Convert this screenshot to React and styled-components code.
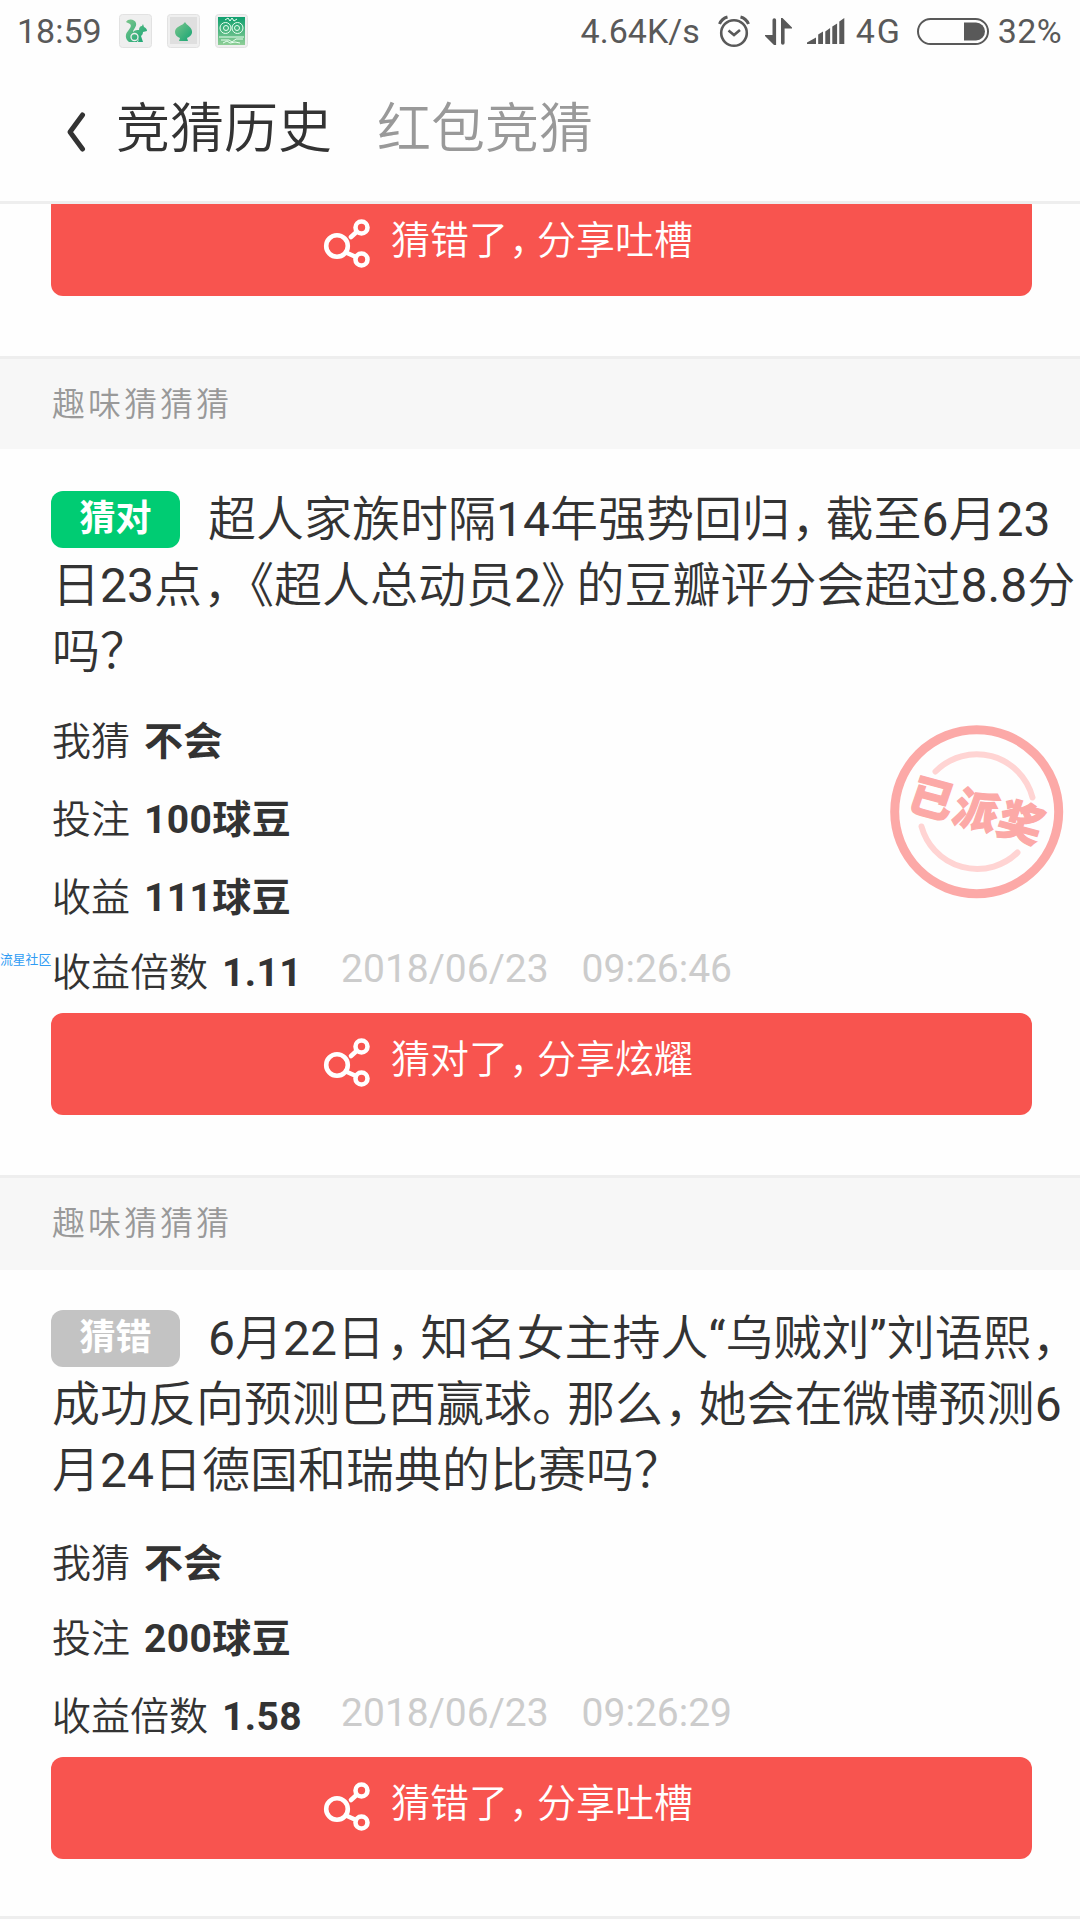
import React from 'react';
import styled, { createGlobalStyle, css } from 'styled-components';

const GlobalStyle = createGlobalStyle`
	html, body {
		margin: 0;
		background: #fff;
	}

	body {
		overflow: hidden;
		font-family: Roboto, "Noto Sans CJK SC", sans-serif;
		text-spacing-trim: space-all;
		color: #333;
	}
`;

const Screen = styled.div`
	position: relative;
	display: flex;
	flex-direction: column;
	width: 1080px;
	height: 1920px;
	overflow: hidden;
	background: #fefefe;
`;

const StatusBar = styled.div`
	display: flex;
	flex: none;
	align-items: center;
	height: 62px;
	padding: 0 18px 0 17px;
	box-sizing: border-box;
	font-size: 34px;
	line-height: 62px;
	color: #595959;

	svg {
		flex: none;
	}
`;

const Notifications = styled.div`
	display: flex;
	gap: 15px;
	margin-left: 17px;
`;

const StatusText = styled.span`
	white-space: nowrap;
	margin-left: ${props => props.$left || 0}px;
	letter-spacing: ${props => props.$spacing || 0}px;
`;

const Spacer = styled.div`
	flex: 1;
`;

const StatusIcon = styled.svg`
	margin-left: ${props => props.$left || 0}px;
`;

const Header = styled.div`
	display: flex;
	flex: none;
	align-items: flex-start;
	height: 142px;
	padding-left: 64px;
	box-sizing: border-box;
	border-bottom: 3px solid #eee;
`;

const BackIcon = styled.svg`
	margin-top: 48px;
	margin-right: 28px;
`;

const Tab = styled.div`
	margin-top: 28px;
	margin-right: 45px;
	font-size: 54px;
	line-height: 80px;
	font-weight: 350;
	color: ${props => (props.$active ? '#333' : '#999')};
`;

const List = styled.div`
	flex: 1;
	overflow: hidden;
`;

const Card = styled.div`
	display: flex;
	flex-direction: column;
	height: ${props => props.$height}px;
	padding: ${props => props.$top}px 48px 0 51px;
	box-sizing: border-box;
	border-bottom: 3px solid #eee;
`;

const ClippedCard = styled(Card)`
	margin-top: -10px;
`;

const SectionTitle = styled.div`
	height: ${props => props.$height}px;
	padding-left: 52px;
	box-sizing: border-box;
	background: #f7f7f7;
	font-size: 33px;
	line-height: 92px;
	letter-spacing: 3px;
	font-weight: 350;
	color: #999;
`;

const Question = styled.div`
	margin-left: 1px;
	margin-right: -48px;
	height: 198px;
	font-size: 48px;
	line-height: 64px;
	font-weight: 350;
	white-space: nowrap;
`;

const Line = styled.div`
	display: flex;
	height: 66px;
`;

const Badge = styled.span`
	display: block;
	flex: none;
	width: 129px;
	height: 57px;
	margin: 3px 28px 0 -1px;
	border-radius: 12px;
	background: ${props => (props.$win ? '#00cc73' : '#c3c3c3')};
	color: #fff;
	font-size: 36px;
	line-height: 56px;
	font-weight: 700;
	text-align: center;
`;

const Mark = styled.span`
	margin-left: ${props => props.$before || 0}em;
	margin-right: ${props => props.$after || 0}em;
	font-feature-settings: "halt";
`;

const Regular = styled.span`
	font-weight: 400;
`;

const Detail = styled.div`
	display: flex;
	height: ${props => props.$height || 78}px;
	margin-left: 1px;
	font-size: 39px;
	line-height: 64px;
	font-weight: 350;
`;

const Value = styled.span`
	margin-left: 14px;
	font-weight: 700;
	letter-spacing: 0.4px;
`;

const Time = styled.span`
	display: flex;
	gap: 33px;
	margin-top: -4px;
	margin-left: ${props => props.$left}px;
	font-weight: 400;
	color: #ccc;
`;

const ShareButton = styled.div`
	display: flex;
	flex: none;
	width: 981px;
	height: 102px;
	padding-left: 271px;
	box-sizing: border-box;
	border-radius: 12px;
	background: #f8544f;
	color: #fff;
	font-size: 39px;
	line-height: 94px;
	font-weight: 350;

	svg {
		flex: none;
		margin-top: 23px;
		margin-right: 21px;
	}
`;

const overlay = css`
	position: absolute;
	z-index: 1;
`;

const Stamp = styled.div`
	${overlay}
	left: 889px;
	top: 724px;
	width: 176px;
	height: 176px;

	svg {
		display: block;
	}
`;

const StampText = styled.div`
	position: absolute;
	inset: 0;
	display: flex;
	align-items: center;
	justify-content: center;
	color: #fca9a7;
	font-size: 44px;
	line-height: 44px;
	font-weight: 900;
	white-space: nowrap;
	letter-spacing: 2px;
	-webkit-text-stroke: 1.2px #fca9a7;
	transform: rotate(15deg) skewX(-4deg);
`;

const Watermark = styled.div`
	${overlay}
	left: 0;
	top: 951px;
	font-size: 12.8px;
	line-height: 18px;
	color: #2f9cf4;
	white-space: nowrap;
`;

// punctuation is set half-width, with a little air on its open side
const MARKS = {
	'，': { before: 0.03, after: 0.21, },
	'。': { after: 0.23, },
	'《': { before: 0.26, },
	'》': { after: 0.24, },
	'？': {},
};

const Tight = ({ text, }) => (
	<span>
		{
			text.split(/([，。《》？]|[\d.]+|[“”])/).map((part, i) => {
				if (MARKS[part]) {
					return <Mark key={i} $before={MARKS[part].before} $after={MARKS[part].after}>{part}</Mark>;
				}

				return /^[\d“”]/.test(part) ? <Regular key={i}>{part}</Regular> : part;
			})
		}
	</span>
);

const AppTile = ({ children, id, }) => (
	<svg width="33" height="34" viewBox="0 0 33 34">
		<defs>
			<linearGradient id={id} x1="0" y1="0" x2="0" y2="1">
				<stop offset="0" stopColor="#0e9f6e" />
				<stop offset="1" stopColor="#8fce96" />
			</linearGradient>
			<linearGradient id={`${id}-light`} x1="0" y1="0" x2="1" y2="1">
				<stop offset="0" stopColor="#7cc68c" />
				<stop offset="1" stopColor="#14a473" />
			</linearGradient>
		</defs>
		<rect x="0.5" y="0.5" width="32" height="33" rx="3" fill="#efefef" stroke="#e2e2e2" />
		{children}
	</svg>
);

const ShareIcon = () => (
	<svg width="48" height="52" viewBox="0 0 48 52" fill="none" stroke="#fff" strokeWidth="4.600">
		<circle cx="15" cy="29" r="10.800" />
		<circle cx="39.500" cy="10.500" r="6" />
		<circle cx="39.500" cy="42.500" r="6" />
		<path d="M34.500 15 L29 20 M24 35.500 L34 40" strokeLinecap="round" />
	</svg>
);

const Share = ({ children, }) => (
	<ShareButton>
		<ShareIcon />
		<Tight text={children} />
	</ShareButton>
);

const guesses = [
	{
		win: true,
		titleHeight: 90,
		height: 729,
		top: 39,
		footer: 60,
		lines: ['超人家族时隔14年强势回归，截至6月23', '日23点，《超人总动员2》的豆瓣评分会超过8.8分', '吗？'],
		details: [['我猜', '不会', 78], ['投注', '100球豆', 78], ['收益', '111球豆', 75]],
		rate: '1.11',
		timeLeft: 39,
		time: ['2018/06/23', '09:26:46'],
		share: '猜对了，分享炫耀',
	},
	{
		win: false,
		titleHeight: 92,
		height: 649,
		top: 37,
		footer: 57,
		lines: ['6月22日，知名女主持人“乌贼刘”刘语熙，', '成功反向预测巴西赢球。那么，她会在微博预测6', '月24日德国和瑞典的比赛吗？'],
		details: [['我猜', '不会', 75], ['投注', '200球豆', 78]],
		rate: '1.58',
		timeLeft: 39,
		time: ['2018/06/23', '09:26:29'],
		share: '猜错了，分享吐槽',
	},
];

const CardFoot = styled.div`
	flex: none;
	height: ${props => props.$height}px;
`;

const Guess = ({ item, }) => (
	<>
		<SectionTitle $height={item.titleHeight}>趣味猜猜猜</SectionTitle>
		<Card $height={item.height} $top={item.top}>
			<Question>
				{
					item.lines.map((line, i) => (
						<Line key={line}>
							{i === 0 && <Badge $win={item.win}>{item.win ? '猜对' : '猜错'}</Badge>}
							<Tight text={line} />
						</Line>
					))
				}
			</Question>
			<Spacer />
			{
				item.details.map(([label, value, height]) => (
					<Detail key={label} $height={height}>
						{label}
						<Value>{value}</Value>
					</Detail>
				))
			}
			<Detail $height={72}>
				收益倍数
				<Value>{item.rate}</Value>
				<Time $left={item.timeLeft}>
					<span>{item.time[0]}</span>
					<span>{item.time[1]}</span>
				</Time>
			</Detail>
			<Share>{item.share}</Share>
			<CardFoot $height={item.footer} />
		</Card>
	</>
);

const App = () => (
	<Screen>
		<GlobalStyle />
		<StatusBar>
			<StatusText>18:59</StatusText>
			<Notifications>
				<AppTile id="squirrel">
					<path fill="url(#squirrel-light)" d="M7 8c2-4 9-3 10 1 1 4-3 6-3 9 2-2 4-2 6-2 0-2 1-4 3-4l1-2 1 3c2 1 3 2 3 4l-4 1c0 2-1 3-2 4l2 6h-5l1-4-2 4H10c-4-3-4-8-1-11 2-3 4-5 2-7-1-1-3-1-4-2z" />
					<circle cx="15.500" cy="23" r="3.500" fill="none" stroke="#eee" strokeWidth="1.300" />
				</AppTile>
				<AppTile id="spade">
					<path fill="#dfdfdf" d="M3 3h27v27H3z" />
					<path fill="url(#spade-light)" d="M18 8c1 3 8 5 7 11-1 3-3 4-5 5l1 3h-9l1-3c-3-1-5-3-5-6 0-6 8-6 10-10z" />
				</AppTile>
				<AppTile id="owl">
					<path fill="url(#owl)" d="M3 3h27v28H3z" />
					<g fill="none" stroke="#e9fff0" strokeWidth="1">
						<circle cx="10.500" cy="14" r="5.500" />
						<circle cx="22.500" cy="14" r="5.500" />
						<circle cx="11" cy="14" r="2.500" />
						<circle cx="22" cy="14" r="2.500" />
						<path d="M10 6l3-2 2 3 2-3 2 3 3-2M4 23h25M6 26h8l3 2 4-3h7M8 29l4-2 3 2 5-1 5 1" />
					</g>
				</AppTile>
			</Notifications>
			<Spacer />
			<StatusText>4.64K/s</StatusText>
			<StatusIcon $left={18} width="32" height="33" viewBox="0 0 32 33" fill="none" stroke="#595959" strokeWidth="2.600">
				<circle cx="16" cy="18" r="12.800" />
				<path d="M10.500 15.500l5.500 4.500 6-5" />
				<path d="M1.500 9c1.500-3.500 4-6 8-7M30.500 9c-1.500-3.500-4-6-8-7" strokeWidth="3" />
			</StatusIcon>
			<StatusIcon $left={15} width="27" height="27" viewBox="0 0 27 27" fill="#595959">
				<path d="M7.500 2a1.800 1.800 0 0 1 3.600 0v25H9L0 18v-1h7.500zM16 25a1.800 1.800 0 0 0 3.600 0V10.500H27V9.500L17.500 0H16z" />
			</StatusIcon>
			<StatusIcon $left={15} width="38" height="26" viewBox="0 0 38 26" fill="#595959">
				<path d="M0 26v-1.500l9-5V26zM11.200 26v-9.500l4.800-3V26zM18.300 26V13.500l4.800-3.500V26zM25.300 26V8.500l4.800-3V26zM32.300 26V3.500L37.300 0v26z" />
			</StatusIcon>
			<StatusText $left={11} $spacing={1.8}>4G</StatusText>
			<StatusIcon $left={15} width="72" height="27" viewBox="0 0 72 27">
				<rect x="1" y="1" width="70" height="25" rx="12.500" fill="none" stroke="#595959" strokeWidth="2" />
				<path fill="#595959" d="M47 4.500h12a9 9 0 0 1 0 18H47z" />
			</StatusIcon>
			<StatusText $left={9} $spacing={0.4}>32%</StatusText>
		</StatusBar>
		<Header>
			<BackIcon width="24" height="44" viewBox="0 0 24 44" fill="none" stroke="#333" strokeWidth="5" strokeLinecap="round" strokeLinejoin="round">
				<path d="M18.500 5L6 22l12.500 17" />
			</BackIcon>
			<Tab $active>竞猜历史</Tab>
			<Tab>红包竞猜</Tab>
		</Header>
		<List>
			<ClippedCard $height={165} $top={0}>
				<Share>猜错了，分享吐槽</Share>
			</ClippedCard>
			{guesses.map(item => <Guess key={item.rate} item={item} />)}
		</List>
		<Stamp>
			<svg width="176" height="176" viewBox="0 0 176 176" fill="none" strokeLinecap="round">
				<circle cx="87.700" cy="87.700" r="82" stroke="#fca9a7" strokeWidth="9" />
				<path d="M46.500 47.500A57.700 57.700 0 0 1 143.500 73.500M32.500 102.500A57.700 57.700 0 0 0 128.500 128.500" stroke="#ffd4d3" strokeWidth="6" />
			</svg>
			<StampText>已派奖</StampText>
		</Stamp>
		<Watermark>流星社区</Watermark>
	</Screen>
);

export default App;
